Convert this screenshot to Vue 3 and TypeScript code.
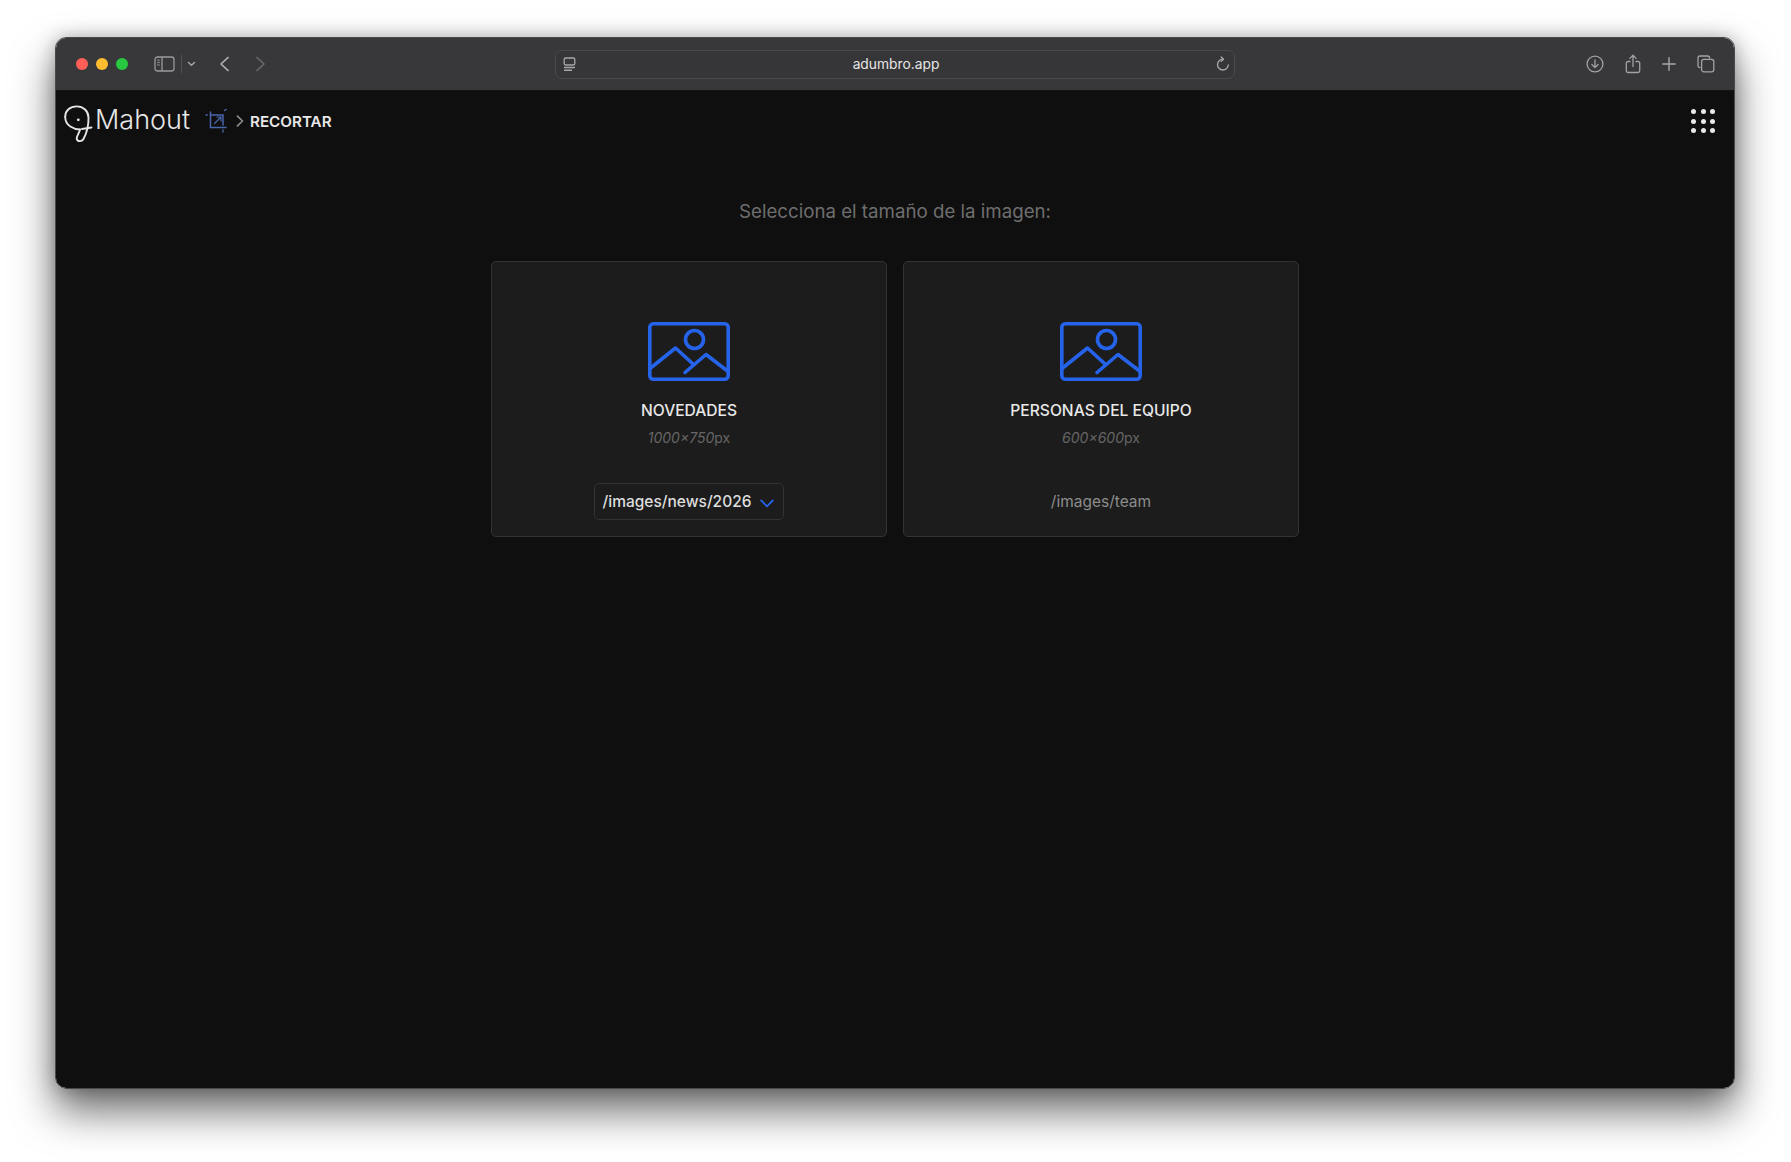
<script setup lang="ts">
// Recortar: pick the image size, shown inside a Safari window on a white page.
interface Preset {
  title: string
  size: string
  folder: string
  selectable: boolean
}

const presets: Preset[] = [
  { title: 'NOVEDADES', size: '1000×750', folder: '/images/news/2026', selectable: true },
  { title: 'PERSONAS DEL EQUIPO', size: '600×600', folder: '/images/team', selectable: false },
]
const dots = Array.from({ length: 9 }, (_, i) => i)
</script>

<template>
  <div class="page">
    <div class="window">
      <header class="chrome">
        <div class="lights">
          <span class="light light--red"></span>
          <span class="light light--yellow"></span>
          <span class="light light--green"></span>
        </div>
        <svg class="chrome-icon sidebar-icon" width="21" height="16" viewBox="0 0 21 16" fill="none" stroke="#9a9a9c" stroke-width="1.3">
          <rect x="1" y="1" width="19" height="14" rx="2.5" />
          <path d="M8 1v14" />
          <path d="M3.2 4.2h2.6M3.2 6.6h2.6M3.2 9h2.6" stroke-width="1" />
        </svg>
        <span class="chrome-sep"></span>
        <svg class="chrome-icon caret-icon" width="9" height="6" viewBox="0 0 9 6" fill="none" stroke="#a5a5a7" stroke-width="1.5" stroke-linecap="round" stroke-linejoin="round">
          <path d="M1.5 1.5 4.5 4.3 7.5 1.5" />
        </svg>
        <svg class="chrome-icon back-icon" width="11" height="16" viewBox="0 0 11 16" fill="none" stroke="#b2b2b4" stroke-width="1.7" stroke-linecap="round" stroke-linejoin="round">
          <path d="M9 1.5 2 8l7 6.5" />
        </svg>
        <svg class="chrome-icon forward-icon" width="11" height="16" viewBox="0 0 11 16" fill="none" stroke="#68686a" stroke-width="1.7" stroke-linecap="round" stroke-linejoin="round">
          <path d="M2 1.5 9 8l-7 6.5" />
        </svg>

        <div class="address">
          <svg width="13" height="15" viewBox="0 0 13 15" fill="none" stroke="#a8a8aa">
            <rect x="1.2" y="1" width="10.6" height="7" rx="1.4" stroke-width="1.3" />
            <path d="M1 10.4h11M1 13.2h8" stroke-width="1.5" />
          </svg>
          <span class="address-text">adumbro.app</span>
          <svg width="14" height="16" viewBox="0 0 14 16" fill="none" stroke="#a8a8aa" stroke-width="1.3" stroke-linecap="round" stroke-linejoin="round">
            <path d="M12.3 8.8A5.4 5.4 0 1 1 7 3.2" />
            <path d="M5.2 1 7.5 3.2 5.2 5.4" />
          </svg>
        </div>

        <div class="chrome-actions">
          <svg width="18" height="18" viewBox="0 0 18 18" fill="none" stroke="#a2a2a4" stroke-width="1.3" stroke-linecap="round" stroke-linejoin="round">
            <circle cx="9" cy="9" r="7.9" />
            <path d="M9 4.8v7.6M5.9 9.5 9 12.6l3.1-3.1" />
          </svg>
          <svg width="16" height="20" viewBox="0 0 16 20" fill="none" stroke="#a2a2a4" stroke-width="1.3" stroke-linecap="round" stroke-linejoin="round">
            <path d="M5 7.5H3a1.7 1.7 0 0 0-1.7 1.7v7.6A1.7 1.7 0 0 0 3 18.5h10a1.7 1.7 0 0 0 1.7-1.7V9.2A1.7 1.7 0 0 0 13 7.5h-2" />
            <path d="M8 12.5V1.5M4.9 4.4 8 1.3l3.1 3.1" />
          </svg>
          <svg width="14" height="14" viewBox="0 0 14 14" fill="none" stroke="#a8a8aa" stroke-width="1.4" stroke-linecap="round">
            <path d="M7 .8v12.4M.8 7h12.4" />
          </svg>
          <svg width="18" height="18" viewBox="0 0 18 18" fill="none" stroke="#a2a2a4" stroke-width="1.3">
            <path d="M3.5 12.6H3a2 2 0 0 1-2-2V3a2 2 0 0 1 2-2h7.6a2 2 0 0 1 2 2v.6" />
            <rect x="4.6" y="4.4" width="12.2" height="12.4" rx="2.2" />
          </svg>
        </div>
      </header>

      <main class="content">
        <nav class="appbar">
          <svg class="logo-mark" width="30" height="38" viewBox="0 0 30 38" fill="none" stroke="#e4e4e4" stroke-width="1.9" stroke-linecap="round" stroke-linejoin="round">
            <path d="M1.2 11.7C1.2 5.5 6 1.4 12.7 1.4c6.8 0 11.6 4.6 11.8 11.1.2 7.5-1.5 15-5 21.5-1.5 2.8-6.2 3-6.8-.2-.3-2.5 2.3-4.8 3.3-9.3" />
            <path d="M16 24.5C10 24.5 1.2 21 1.2 11.7" />
            <path d="M18 24 27.5 22.5" />
            <circle cx="14.3" cy="14.8" r="1.4" fill="#e4e4e4" stroke="none" />
          </svg>
          <span class="logo-word">Mahout</span>
          <svg class="crop-icon" width="24" height="24" viewBox="0 0 24 24" fill="none" stroke="#4a66ab" stroke-width="1.5" stroke-linecap="round">
            <path d="M5.5 3v15.5H21" />
            <path d="M5.5 6H18v10" />
            <path d="M9.5 14.5 16 8M12 8h4v4" stroke-width="1.2" />
            <path d="M1 6h1.2M19.5 1.5l2-1.5M18 21v2" stroke-width="1.4" />
          </svg>
          <svg class="crumb-sep" width="8" height="12" viewBox="0 0 8 12" fill="none" stroke="#8a8a8a" stroke-width="1.7" stroke-linecap="round" stroke-linejoin="round">
            <path d="M1.5 1.2 6.5 6l-5 4.8" />
          </svg>
          <span class="crumb">RECORTAR</span>
          <div class="apps">
            <span v-for="d in dots" :key="d" class="apps-dot"></span>
          </div>
        </nav>

        <h1 class="prompt">Selecciona el tamaño de la imagen:</h1>

        <section class="cards">
          <article v-for="p in presets" :key="p.title" class="card">
            <svg class="card-icon" width="84" height="62" viewBox="0 0 84 62" fill="none" stroke="#2563eb" stroke-width="3.6" stroke-linecap="round" stroke-linejoin="round">
              <rect x="2.8" y="2.8" width="78.4" height="55.4" rx="3.5" />
              <circle cx="47.5" cy="18.5" r="9" />
              <path d="M3 47.5 28.5 27l17 15.5" />
              <path d="M38 51.5 59 33.5 80.5 50" />
            </svg>
            <h2 class="card-title">{{ p.title }}</h2>
            <p class="card-size"><em>{{ p.size }}</em>px</p>
            <div v-if="p.selectable" class="folder-select">
              <span>{{ p.folder }}</span>
              <svg width="14" height="9" viewBox="0 0 14 9" fill="none" stroke="#2563eb" stroke-width="1.8" stroke-linecap="round" stroke-linejoin="round">
                <path d="M1.2 1.5 7 7.3l5.8-5.8" />
              </svg>
            </div>
            <div v-else class="folder-static">{{ p.folder }}</div>
          </article>
        </section>
      </main>
    </div>
  </div>
</template>

<style scoped>
.page {
  box-sizing: border-box;
  width: 1791px;
  height: 1162px;
  padding: 37px 56px 0 55px;
  background: #fff;
  overflow: hidden;
  font-family: Inter, "Liberation Sans", sans-serif;
}
.window {
  display: flex;
  flex-direction: column;
  box-sizing: border-box;
  height: 1052px;
  border: 1px solid #4a4a4c;
  border-radius: 11px;
  overflow: hidden;
  box-shadow: 0 22px 42px rgba(0, 0, 0, 0.58), 0 0 18px rgba(0, 0, 0, 0.25);
}
.chrome {
  display: flex;
  align-items: center;
  flex: 0 0 53px;
  padding: 0 19px 0 20px;
  background: #38383a;
  border-bottom: 1px solid #141414;
  box-sizing: border-box;
}
.lights {
  display: flex;
  gap: 8px;
}
.light {
  width: 12px;
  height: 12px;
  border-radius: 50%;
}
.light--red { background: #ff5f57; }
.light--yellow { background: #febc2e; }
.light--green { background: #28c840; }
.chrome-icon { flex: none; }
.sidebar-icon { margin-left: 26px; }
.chrome-sep {
  width: 1px;
  height: 18px;
  margin-left: 6px;
  background: #525254;
}
.caret-icon { margin-left: 5px; }
.back-icon { margin-left: 23px; }
.forward-icon { margin-left: 25px; }
.address {
  display: flex;
  align-items: center;
  justify-content: space-between;
  width: 680px;
  height: 29px;
  box-sizing: border-box;
  margin-left: 289px;
  padding: 0 4px 0 7px;
  border: 1px solid #4a4a4c;
  border-radius: 7px;
  background: #363638;
}
.address-text {
  font-size: 13.8px;
  color: #e6e6e6;
}
.chrome-actions {
  display: flex;
  align-items: center;
  gap: 21px;
  margin-left: auto;
}
.content {
  flex: 1;
  background: #0f0f0f;
}
.appbar {
  display: flex;
  align-items: center;
  height: 60px;
  padding: 0 19px 0 8px;
}
.logo-mark {
  flex: none;
  margin-top: 6px;
}
.logo-word {
  margin-left: 1px;
  margin-top: -4px;
  font-size: 27px;
  font-weight: 300;
  color: #e6e6e6;
}
.crop-icon { margin-left: 15px; }
.crumb-sep { margin-left: 7px; }
.crumb {
  margin-left: 6px;
  font-size: 15.2px;
  font-weight: 600;
  color: #e8e8e8;
}
.apps {
  display: grid;
  grid-template-columns: repeat(3, 5px);
  gap: 4.5px;
  margin-left: auto;
}
.apps-dot {
  width: 5px;
  height: 5px;
  border-radius: 50%;
  background: #e8e8e8;
}
.prompt {
  margin: 49px 0 37px;
  font-size: 18.7px;
  line-height: 24px;
  font-weight: 400;
  text-align: center;
  color: #6e6e6e;
}
.cards {
  display: flex;
  justify-content: center;
  gap: 16px;
}
.card {
  display: flex;
  flex-direction: column;
  align-items: center;
  box-sizing: border-box;
  width: 396px;
  height: 276px;
  padding: 59px 0 16px;
  background: #1c1c1c;
  border: 1px solid #333;
  border-radius: 5px;
}
.card-title {
  margin: 17px 0 0;
  font-size: 15.6px;
  line-height: 22px;
  font-weight: 500;
  color: #e8e8e8;
}
.card-size {
  margin: 6px 0 0;
  font-size: 14px;
  line-height: 20px;
  color: #666;
}
.folder-select {
  display: flex;
  align-items: center;
  gap: 9px;
  box-sizing: border-box;
  height: 37px;
  margin-top: auto;
  padding: 0 9px 0 8px;
  border: 1px solid #333;
  border-radius: 5px;
  font-size: 15.5px;
  font-weight: 500;
  color: #dedede;
}
.folder-select svg { margin-top: 3px; }
.folder-static {
  display: flex;
  align-items: center;
  height: 37px;
  margin-top: auto;
  font-size: 15.5px;
  color: #8c8c8c;
}
</style>
